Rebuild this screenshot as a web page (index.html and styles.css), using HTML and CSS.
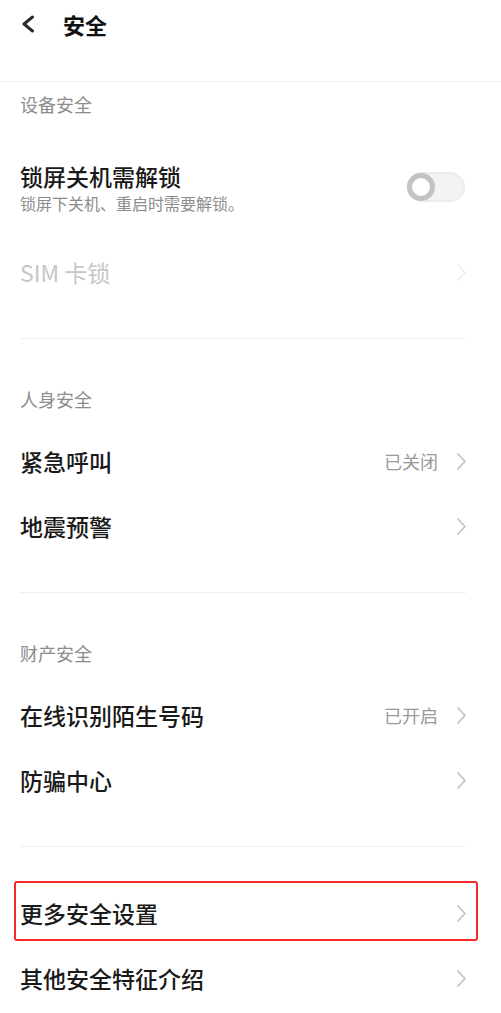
FILE: index.html
```html
<!DOCTYPE html>
<html lang="zh-CN">
<head>
  <meta charset="UTF-8">
  <title>安全</title>
  <meta name="viewport" content="width=device-width, initial-scale=1">
  <link rel="stylesheet" href="styles.css">
</head>
<body>
  <!-- 顶部标题栏 -->
  <header>
    <div class="bar">
      <svg class="back" width="14" height="18" viewBox="0 0 14 18">
        <path d="M11.5 2 L3 9 L11.5 16" fill="none" stroke="#2b2b2b" stroke-width="3" stroke-linecap="round" stroke-linejoin="round"/>
      </svg>
      <div class="title">安全</div>
    </div>
  </header>

  <div class="content">
    <!-- 设备安全 -->
    <div class="group first">
      <div class="section-title">设备安全</div>
      <div class="row tall">
        <div class="text">
          <div class="label">锁屏关机需解锁</div>
          <div class="sub">锁屏下关机、重启时需要解锁。</div>
        </div>
        <div class="switch"><div class="knob"></div></div>
      </div>
      <div class="row disabled">
        <div class="label">SIM 卡锁</div>
        <svg class="arrow" width="11" height="19" viewBox="0 0 11 19"><path d="M2 2 L9 9.5 L2 17"/></svg>
      </div>
    </div>

    <!-- 人身安全 -->
    <div class="group">
      <div class="section-title">人身安全</div>
      <div class="row">
        <div class="label">紧急呼叫</div>
        <div class="value">已关闭</div>
        <svg class="arrow" width="11" height="19" viewBox="0 0 11 19"><path d="M2 2 L9 9.5 L2 17"/></svg>
      </div>
      <div class="row">
        <div class="label">地震预警</div>
        <svg class="arrow" width="11" height="19" viewBox="0 0 11 19"><path d="M2 2 L9 9.5 L2 17"/></svg>
      </div>
    </div>

    <!-- 财产安全 -->
    <div class="group">
      <div class="section-title">财产安全</div>
      <div class="row">
        <div class="label">在线识别陌生号码</div>
        <div class="value">已开启</div>
        <svg class="arrow" width="11" height="19" viewBox="0 0 11 19"><path d="M2 2 L9 9.5 L2 17"/></svg>
      </div>
      <div class="row">
        <div class="label">防骗中心</div>
        <svg class="arrow" width="11" height="19" viewBox="0 0 11 19"><path d="M2 2 L9 9.5 L2 17"/></svg>
      </div>
    </div>

    <!-- 其他 -->
    <div class="group last">
      <div class="row marked">
        <div class="label">更多安全设置</div>
        <svg class="arrow" width="11" height="19" viewBox="0 0 11 19"><path d="M2 2 L9 9.5 L2 17"/></svg>
      </div>
      <div class="row">
        <div class="label">其他安全特征介绍</div>
        <svg class="arrow" width="11" height="19" viewBox="0 0 11 19"><path d="M2 2 L9 9.5 L2 17"/></svg>
      </div>
    </div>
  </div>
</body>
</html>
```

FILE: styles.css
```css
/* Global Styles */
body {
  font-family: "Noto Sans CJK SC", "Noto Sans", sans-serif;
  background-color: #fff;
  color: #1a1a1a;
  margin: 0;
  padding: 0;
}
header {
  height: 82px;
  box-sizing: border-box;
  border-bottom: 1px solid #f0f0f0;
}
.bar {
  display: flex;
  align-items: center;
  height: 47px;
  padding: 0 20px 0 21px;
}
.back {
  display: block;
  margin-right: 28px;
}
.title {
  font-size: 22px;
  font-weight: bold;
  line-height: 26px;
  color: #111;
}
.content {
  padding: 0 35px 0 20px;
}
/* Groups */
.group {
  border-top: 1px solid #eeeeee;
  padding-bottom: 33px;
}
.group.first {
  border-top: none;
}
.group.last {
  padding-top: 34px;
  padding-bottom: 0;
}
.section-title {
  font-size: 18px;
  line-height: 24px;
  color: #8c8c8c;
  padding: 48px 0 18px;
}
.group.first .section-title {
  padding-top: 10px;
}
/* Rows */
.row {
  display: flex;
  align-items: center;
  height: 65px;
  position: relative;
}
.row.tall {
  height: 106px;
}
.label {
  flex: 1;
  font-size: 23px;
  font-weight: 500;
  line-height: 30px;
  margin-top: -2px;
}
.text {
  flex: 1;
}
.text .label {
  margin-top: 0;
}
.sub {
  font-size: 16px;
  line-height: 22px;
  margin-top: 1px;
  color: #8c8c8c;
}
.value {
  font-size: 18px;
  color: #9a9a9a;
  margin-right: 18px;
  margin-top: -2px;
}
.arrow {
  display: block;
  margin-right: -1px;
}
.arrow path {
  fill: none;
  stroke: #c4c4c4;
  stroke-width: 1.8;
  stroke-linecap: round;
  stroke-linejoin: round;
}
.row.disabled .label {
  color: #c6c6c6;
  font-weight: 400;
}
.row.disabled .arrow path {
  stroke: #ededed;
}
/* Toggle */
.switch {
  width: 58px;
  height: 30px;
  box-sizing: border-box;
  border-radius: 15px;
  background-color: #f3f3f3;
  border: 2px solid #ececec;
  position: relative;
  margin-right: 1px;
}
.knob {
  position: absolute;
  top: -1px;
  left: -2px;
  width: 28px;
  height: 28px;
  box-sizing: border-box;
  border-radius: 50%;
  background-color: #fff;
  border: 5px solid #c3c3c3;
}
/* 红框标注 */
.row.marked::after {
  content: "";
  position: absolute;
  top: 0;
  left: -6px;
  right: -12px;
  height: 60px;
  box-sizing: border-box;
  border: 2px solid #f5282a;
  border-radius: 3px;
}
```
